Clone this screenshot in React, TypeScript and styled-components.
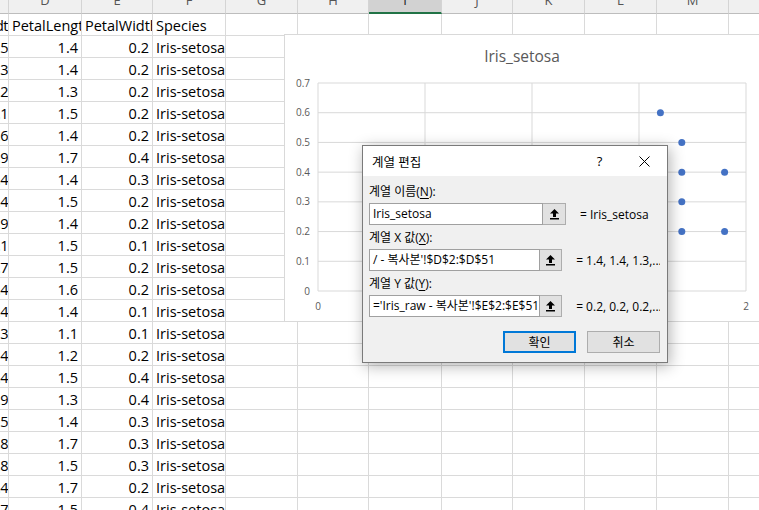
import React from 'react'
import styled, { createGlobalStyle } from 'styled-components'

const GlobalStyle = createGlobalStyle`
  html, body {
    margin: 0;
    padding: 0;
    background: #fff;
    overflow: hidden;
  }
  body {
    width: 759px;
    height: 510px;
    font-family: "Open Sans", "Noto Sans CJK KR", sans-serif;
  }
`

const COLS = [9, 73, 71, 73, 72, 71, 73, 71, 72, 72, 72, 72]
const LETTERS = ['', 'D', 'E', 'F', 'G', 'H', 'I', 'J', 'K', 'L', 'M', 'N']

// sepal width, petal length, petal width, species
const ROWS: [string, string, string, string][] = [
  ['3.5', '1.4', '0.2', 'Iris-setosa'],
  ['3', '1.4', '0.2', 'Iris-setosa'],
  ['3.2', '1.3', '0.2', 'Iris-setosa'],
  ['3.1', '1.5', '0.2', 'Iris-setosa'],
  ['3.6', '1.4', '0.2', 'Iris-setosa'],
  ['3.9', '1.7', '0.4', 'Iris-setosa'],
  ['3.4', '1.4', '0.3', 'Iris-setosa'],
  ['3.4', '1.5', '0.2', 'Iris-setosa'],
  ['2.9', '1.4', '0.2', 'Iris-setosa'],
  ['3.1', '1.5', '0.1', 'Iris-setosa'],
  ['3.7', '1.5', '0.2', 'Iris-setosa'],
  ['3.4', '1.6', '0.2', 'Iris-setosa'],
  ['3.4', '1.4', '0.1', 'Iris-setosa'],
  ['3', '1.1', '0.1', 'Iris-setosa'],
  ['4', '1.2', '0.2', 'Iris-setosa'],
  ['4.4', '1.5', '0.4', 'Iris-setosa'],
  ['3.9', '1.3', '0.4', 'Iris-setosa'],
  ['3.5', '1.4', '0.3', 'Iris-setosa'],
  ['3.8', '1.7', '0.3', 'Iris-setosa'],
  ['3.8', '1.5', '0.3', 'Iris-setosa'],
  ['3.4', '1.7', '0.2', 'Iris-setosa'],
  ['3.7', '1.5', '0.4', 'Iris-setosa'],
]

const POINTS: [number, number][] = [
  [1.4, 0.2], [1.4, 0.2], [1.3, 0.2], [1.5, 0.2], [1.4, 0.2], [1.7, 0.4], [1.4, 0.3],
  [1.5, 0.2], [1.4, 0.2], [1.5, 0.1], [1.5, 0.2], [1.6, 0.2], [1.4, 0.1], [1.1, 0.1],
  [1.2, 0.2], [1.5, 0.4], [1.3, 0.4], [1.4, 0.3], [1.7, 0.3], [1.5, 0.3], [1.7, 0.2],
  [1.5, 0.4], [1.0, 0.2], [1.7, 0.5], [1.9, 0.2], [1.6, 0.2], [1.6, 0.4], [1.5, 0.2],
  [1.4, 0.2], [1.6, 0.2], [1.6, 0.2], [1.5, 0.4], [1.5, 0.1], [1.4, 0.2], [1.5, 0.1],
  [1.2, 0.2], [1.3, 0.2], [1.5, 0.1], [1.3, 0.2], [1.5, 0.2], [1.3, 0.3], [1.3, 0.3],
  [1.3, 0.2], [1.6, 0.6], [1.9, 0.4], [1.4, 0.3], [1.6, 0.2], [1.4, 0.2], [1.5, 0.2],
  [1.4, 0.2],
]

const Sheet = styled.div`
  position: relative;
  width: 759px;
  height: 510px;
  overflow: hidden;
`

const Grid = styled.div`
  display: grid;
  grid-template-columns: ${COLS.map((w) => w + 'px').join(' ')};
  grid-template-rows: 14px;
  grid-auto-rows: 22px;
`

const HeaderCell = styled.div<{ $selected?: boolean }>`
  box-sizing: border-box;
  display: flex;
  justify-content: center;
  align-items: flex-start;
  overflow: hidden;
  background: ${(p) => (p.$selected ? '#d2d2d2' : '#f0f0f0')};
  border-right: 1px solid #d4d4d4;
  border-bottom: ${(p) => (p.$selected ? '2px solid #217346' : '1px solid #bdbdbd')};
  color: ${(p) => (p.$selected ? '#222' : '#555')};
  font-size: 13px;
`

const HeaderLetter = styled.span`
  line-height: 14px;
  margin-top: -7px;
`

const Cell = styled.div<{ $align?: 'left' | 'right' }>`
  box-sizing: border-box;
  display: flex;
  align-items: center;
  justify-content: ${(p) => (p.$align === 'right' ? 'flex-end' : 'flex-start')};
  padding: 2px 3px 0;
  overflow: hidden;
  white-space: nowrap;
  border-right: 1px solid #dadada;
  border-bottom: 1px solid #dadada;
  font-size: 14.5px;
  color: #000;
`

const EdgeCell = styled(Cell)`
  padding: 2px 0 0 0;
  letter-spacing: -0.5px;
`

const ChartBox = styled.div`
  position: absolute;
  left: 284px;
  top: 34px;
  width: 476px;
  height: 288px;
  box-sizing: border-box;
  background: #fff;
  border: 1px solid #d9d9d9;
  display: flex;
  flex-direction: column;
`

const ChartTitle = styled.div`
  height: 44px;
  line-height: 43px;
  text-align: center;
  font-size: 15.5px;
  color: #595959;
`

const AxisText = styled.text`
  font-family: "Open Sans", sans-serif;
  font-size: 10px;
  fill: #595959;
`

const Dialog = styled.div`
  position: absolute;
  left: 362px;
  top: 145px;
  width: 306px;
  height: 218px;
  box-sizing: border-box;
  border: 1px solid #7a7a7a;
  background: #f0f0f0;
  box-shadow: 2px 3px 14px rgba(0, 0, 0, 0.3);
  display: flex;
  flex-direction: column;
  font-size: 12px;
  color: #000;
`

const TitleBar = styled.div`
  height: 30px;
  background: #fff;
  display: flex;
  align-items: center;
  padding-left: 9px;
`

const TitleText = styled.div`
  flex: 1;
  font-size: 12.5px;
`

const TitleButton = styled.div`
  width: 45px;
  height: 30px;
  display: flex;
  align-items: center;
  justify-content: center;
  font-size: 13px;
`

const Body = styled.div`
  padding: 3px 7px 0 6px;
  display: flex;
  flex-direction: column;
`

const Label = styled.div`
  line-height: 16px;
  padding: 5px 0 3px;
  u {
    text-decoration: underline;
    text-underline-offset: 2px;
  }
`

const FieldRow = styled.div`
  display: flex;
  align-items: center;
  height: 22px;
`

const Field = styled.div`
  box-sizing: border-box;
  width: 174px;
  height: 22px;
  background: #fff;
  border: 1px solid #a0a0a0;
  padding: 0 3px;
  line-height: 20px;
  white-space: nowrap;
  overflow: hidden;
`

const CollapseButton = styled.div`
  box-sizing: border-box;
  width: 23px;
  height: 22px;
  background: #e1e1e1;
  border: 1px solid #adadad;
  border-left: none;
  display: flex;
  align-items: center;
  justify-content: center;
`

const Preview = styled.div`
  margin-left: 14px;
  white-space: nowrap;
  overflow: hidden;
`

const ButtonRow = styled.div`
  display: flex;
  justify-content: flex-end;
  gap: 11px;
  margin-top: 14px;
`

const DialogButton = styled.div<{ $primary?: boolean }>`
  box-sizing: border-box;
  width: 73px;
  height: 22px;
  background: #e1e1e1;
  border: ${(p) => (p.$primary ? '2px solid #0078d7' : '1px solid #adadad')};
  display: flex;
  align-items: center;
  justify-content: center;
  font-size: 12px;
`

const UpArrow = () => (
  <svg width="11" height="12" viewBox="0 0 11 12">
    <path d="M5.5 1 L10 5.5 H7 V9 H4 V5.5 H1 Z" fill="#000" />
    <rect x="1" y="10" width="9" height="1.5" fill="#000" />
  </svg>
)

const CloseIcon = () => (
  <svg width="11" height="11" viewBox="0 0 11 11">
    <path d="M0.5 0.5 L10.5 10.5 M10.5 0.5 L0.5 10.5" stroke="#000" strokeWidth="1" fill="none" />
  </svg>
)

const ScatterChart = () => {
  // svg origin = page (285, 79)
  const left = 33
  const right = 461
  const top = 4
  const bottom = 212
  const yStep = (bottom - top) / 7
  const xScale = (right - left) / 2
  const yTicks = [0, 1, 2, 3, 4, 5, 6, 7]
  const xGrid = [0, 0.5, 1, 1.5, 2]
  // the 0.5 / 1 / 1.5 labels sit under the dialog
  const xLabels = [0, 2]
  return (
    <svg width="474" height="242">
      {yTicks.map((t) => (
        <line key={'h' + t} x1={left} x2={right} y1={bottom - t * yStep} y2={bottom - t * yStep} stroke="#d9d9d9" />
      ))}
      {xGrid.map((g) => (
        <line key={'v' + g} x1={left + g * xScale} x2={left + g * xScale} y1={top} y2={bottom} stroke="#d9d9d9" />
      ))}
      {yTicks.map((t) => (
        <AxisText key={'yl' + t} x={25} y={bottom - t * yStep + 3.5} textAnchor="end">
          {t === 0 ? '0' : (t / 10).toFixed(1)}
        </AxisText>
      ))}
      {xLabels.map((g) => (
        <AxisText key={'xl' + g} x={left + g * xScale} y={231} textAnchor="middle">
          {String(g)}
        </AxisText>
      ))}
      {POINTS.map(([x, y], i) => (
        <circle key={i} cx={left + x * xScale} cy={bottom - y * 10 * yStep} r={3.5} fill="#4472c4" />
      ))}
    </svg>
  )
}

export default function App() {
  return (
    <>
      <GlobalStyle />
      <Sheet>
        <Grid>
          {LETTERS.map((l, i) => (
            <HeaderCell key={i} $selected={l === 'I'}>
              <HeaderLetter>{l}</HeaderLetter>
            </HeaderCell>
          ))}
          <EdgeCell $align="right">dt</EdgeCell>
          <Cell>PetalLength</Cell>
          <Cell>PetalWidth</Cell>
          <Cell>Species</Cell>
          {COLS.slice(4).map((_, i) => (
            <Cell key={'h' + i} />
          ))}
          {ROWS.map((r, ri) => (
            <React.Fragment key={ri}>
              <EdgeCell $align="right">{r[0]}</EdgeCell>
              <Cell $align="right">{r[1]}</Cell>
              <Cell $align="right">{r[2]}</Cell>
              <Cell>{r[3]}</Cell>
              {COLS.slice(4).map((_, i) => (
                <Cell key={i} />
              ))}
            </React.Fragment>
          ))}
        </Grid>

        <ChartBox>
          <ChartTitle>Iris_setosa</ChartTitle>
          <ScatterChart />
        </ChartBox>

        <Dialog>
          <TitleBar>
            <TitleText>계열 편집</TitleText>
            <TitleButton>?</TitleButton>
            <TitleButton>
              <CloseIcon />
            </TitleButton>
          </TitleBar>
          <Body>
            <Label>
              계열 이름(<u>N</u>):
            </Label>
            <FieldRow>
              <Field>Iris_setosa</Field>
              <CollapseButton>
                <UpArrow />
              </CollapseButton>
              <Preview>= Iris_setosa</Preview>
            </FieldRow>
            <Label>
              계열 X 값(<u>X</u>):
            </Label>
            <FieldRow>
              <Field>/ - 복사본'!$D$2:$D$51</Field>
              <CollapseButton>
                <UpArrow />
              </CollapseButton>
              <Preview>= 1.4, 1.4, 1.3,...</Preview>
            </FieldRow>
            <Label>
              계열 Y 값(<u>Y</u>):
            </Label>
            <FieldRow>
              <Field>='Iris_raw - 복사본'!$E$2:$E$51</Field>
              <CollapseButton>
                <UpArrow />
              </CollapseButton>
              <Preview>= 0.2, 0.2, 0.2,...</Preview>
            </FieldRow>
            <ButtonRow>
              <DialogButton $primary>확인</DialogButton>
              <DialogButton>취소</DialogButton>
            </ButtonRow>
          </Body>
        </Dialog>
      </Sheet>
    </>
  )
}
